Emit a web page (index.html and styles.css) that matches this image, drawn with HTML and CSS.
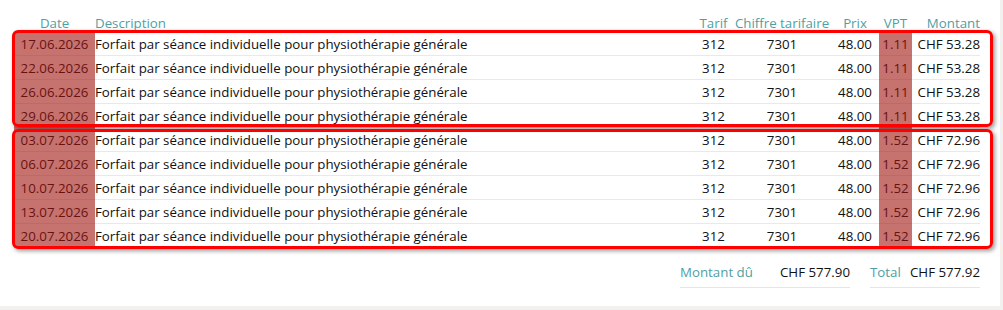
FILE: index.html
```html
<!DOCTYPE html>
<html lang="fr">
<head>
<meta charset="utf-8">
<link rel="stylesheet" href="styles.css">
</head>
<body>
<div class="panel">
  <div class="table">
    <div class="row head">
      <div class="c center">Date</div>
      <div class="c">Description</div>
      <div class="c center">Tarif</div>
      <div class="c center">Chiffre tarifaire</div>
      <div class="c center">Prix</div>
      <div class="c"></div>
      <div class="c center">VPT</div>
      <div class="c right">Montant</div>
    </div>
    <div class="row"><div class="c center">17.06.2026</div><div class="c">Forfait par séance individuelle pour physiothérapie générale</div><div class="c center">312</div><div class="c center">7301</div><div class="c center">48.00</div><div class="c"></div><div class="c center">1.11</div><div class="c right">CHF 53.28</div></div>
    <div class="row"><div class="c center">22.06.2026</div><div class="c">Forfait par séance individuelle pour physiothérapie générale</div><div class="c center">312</div><div class="c center">7301</div><div class="c center">48.00</div><div class="c"></div><div class="c center">1.11</div><div class="c right">CHF 53.28</div></div>
    <div class="row"><div class="c center">26.06.2026</div><div class="c">Forfait par séance individuelle pour physiothérapie générale</div><div class="c center">312</div><div class="c center">7301</div><div class="c center">48.00</div><div class="c"></div><div class="c center">1.11</div><div class="c right">CHF 53.28</div></div>
    <div class="row"><div class="c center">29.06.2026</div><div class="c">Forfait par séance individuelle pour physiothérapie générale</div><div class="c center">312</div><div class="c center">7301</div><div class="c center">48.00</div><div class="c"></div><div class="c center">1.11</div><div class="c right">CHF 53.28</div></div>
    <div class="row"><div class="c center">03.07.2026</div><div class="c">Forfait par séance individuelle pour physiothérapie générale</div><div class="c center">312</div><div class="c center">7301</div><div class="c center">48.00</div><div class="c"></div><div class="c center">1.52</div><div class="c right">CHF 72.96</div></div>
    <div class="row"><div class="c center">06.07.2026</div><div class="c">Forfait par séance individuelle pour physiothérapie générale</div><div class="c center">312</div><div class="c center">7301</div><div class="c center">48.00</div><div class="c"></div><div class="c center">1.52</div><div class="c right">CHF 72.96</div></div>
    <div class="row"><div class="c center">10.07.2026</div><div class="c">Forfait par séance individuelle pour physiothérapie générale</div><div class="c center">312</div><div class="c center">7301</div><div class="c center">48.00</div><div class="c"></div><div class="c center">1.52</div><div class="c right">CHF 72.96</div></div>
    <div class="row"><div class="c center">13.07.2026</div><div class="c">Forfait par séance individuelle pour physiothérapie générale</div><div class="c center">312</div><div class="c center">7301</div><div class="c center">48.00</div><div class="c"></div><div class="c center">1.52</div><div class="c right">CHF 72.96</div></div>
    <div class="row last"><div class="c center">20.07.2026</div><div class="c">Forfait par séance individuelle pour physiothérapie générale</div><div class="c center">312</div><div class="c center">7301</div><div class="c center">48.00</div><div class="c"></div><div class="c center">1.52</div><div class="c right">CHF 72.96</div></div>

    <div class="hl hl-date"></div>
    <div class="hl hl-vpt"></div>
    <div class="box box-1"></div>
    <div class="box box-2"></div>
  </div>

  <div class="summary">
    <div class="sum sum-due"><span class="lbl">Montant dû</span><span class="val">CHF 577.90</span></div>
    <div class="sum sum-total"><span class="lbl">Total</span><span class="val">CHF 577.92</span></div>
  </div>
</div>
</body>
</html>
```

FILE: styles.css
```css
html, body {
  margin: 0;
  padding: 0;
}
body {
  background: #f3f1ef;
  width: 1003px;
  height: 310px;
  overflow: hidden;
  font-family: "Segoe UI", "Open Sans", "Noto Sans", sans-serif;
  font-size: 13.3px;
  color: #111111;
}
.panel {
  background: #ffffff;
  height: 306px;
  width: 1000px;
  box-sizing: border-box;
  padding-top: 10px;
}
.table {
  position: relative;
  margin-left: 14px;
  width: 966px;
}
.row {
  display: grid;
  grid-template-columns: 81px 602px 33px 104px 42px 3px 33px 68px;
  height: 24px;
  align-items: center;
  border-bottom: 1px solid #e9e9e9;
  box-sizing: border-box;
  white-space: nowrap;
}
.row.head {
  height: 22px;
  border-bottom: none;
  color: #4e9fa5;
  align-items: end;
  padding-bottom: 0;
}
.row.last {
  border-bottom: none;
}
.c {
  line-height: 18px;
}
.center { text-align: center; }
.right { text-align: right; }

.hl {
  position: absolute;
  top: 22px;
  height: 215px;
  background: rgba(160, 20, 15, 0.6);
  pointer-events: none;
}
.hl-date { left: 0; width: 81px; }
.hl-vpt { left: 865px; width: 33px; }

.box {
  position: absolute;
  left: -2px;
  width: 981px;
  border: 3px solid #ff0000;
  border-radius: 6px;
  box-sizing: border-box;
  box-shadow: 2px 2px 4px rgba(0, 0, 0, 0.4);
  pointer-events: none;
}
.box-1 { top: 20px; height: 97px; }
.box-2 { top: 119px; height: 120px; }

.summary {
  display: flex;
  justify-content: flex-end;
  gap: 20px;
  margin-top: 12px;
  padding-right: 20px;
}
.sum {
  display: flex;
  justify-content: space-between;
  align-items: center;
  height: 28px;
  border-bottom: 1px solid #e6e6e6;
  box-sizing: border-box;
  padding-bottom: 4px;
}
.sum-due { width: 170px; }
.sum-total { width: 110px; }
.lbl { color: #4e9fa5; }
.val { color: #111111; }
```
